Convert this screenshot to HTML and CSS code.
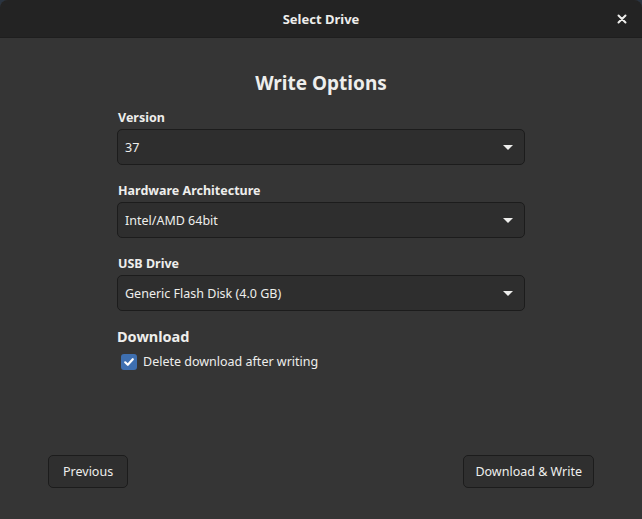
FILE: index.html
```html
<!DOCTYPE html>
<html>
<head>
<meta charset="utf-8">
<link rel="stylesheet" href="styles.css">
</head>
<body>
<div class="window">
  <header class="titlebar">
    <span class="title">Select Drive</span>
    <button class="close" aria-label="Close">
      <svg width="10" height="10" viewBox="0 0 10 10"><path d="M1.5 1.5 L8.5 8.5 M8.5 1.5 L1.5 8.5" stroke="#eeeeec" stroke-width="2" stroke-linecap="round"/></svg>
    </button>
  </header>
  <main class="content">
    <h1 class="heading">Write Options</h1>
    <div class="form">
      <div class="field">
        <label class="label">Version</label>
        <div class="combo"><span>37</span><span class="arrow"></span></div>
      </div>
      <div class="field">
        <label class="label">Hardware Architecture</label>
        <div class="combo"><span>Intel/AMD 64bit</span><span class="arrow"></span></div>
      </div>
      <div class="field">
        <label class="label">USB Drive</label>
        <div class="combo"><span>Generic Flash Disk (4.0 GB)</span><span class="arrow"></span></div>
      </div>
      <div class="download">
        <h2 class="subheading">Download</h2>
        <label class="check">
          <span class="box">
            <svg width="12" height="12" viewBox="0 0 12 12"><path d="M2.2 6.3 L4.8 8.8 L9.8 3.2" stroke="#ffffff" stroke-width="2.2" fill="none" stroke-linecap="round" stroke-linejoin="round"/></svg>
          </span>
          <span>Delete download after writing</span>
        </label>
      </div>
    </div>
  </main>
  <footer class="actions">
    <button class="btn">Previous</button>
    <button class="btn btn-wide">Download &amp; Write</button>
  </footer>
</div>
</body>
</html>
```

FILE: styles.css
```css
* { box-sizing: border-box; }
html, body { margin: 0; padding: 0; }
body {
  width: 642px;
  height: 519px;
  background: #2a3440;
  font-family: "Noto Sans", "Open Sans", sans-serif;
  color: #eeeeec;
  overflow: hidden;
}
.window {
  width: 642px;
  height: 519px;
  background: #353535;
  border-radius: 8px 8px 0 0;
  display: flex;
  flex-direction: column;
  overflow: hidden;
}
.titlebar {
  height: 38px;
  flex: none;
  background: #232323;
  border-bottom: 1px solid #1e1e1e;
  display: flex;
  align-items: center;
  justify-content: center;
  position: relative;
}
.title {
  font-size: 13px;
  font-weight: 700;
  color: #eeeeec;
}
.close {
  position: absolute;
  right: 15px;
  top: 14px;
  width: 10px;
  height: 10px;
  padding: 0;
  border: 0;
  background: none;
  display: flex;
}
.content {
  flex: 1;
  display: flex;
  flex-direction: column;
  align-items: center;
}
.heading {
  margin: 31px 0 0;
  font-size: 19px;
  font-weight: 700;
  line-height: 28px;
  color: #eeeeec;
}
.form {
  width: 408px;
  margin-top: 12px;
  display: flex;
  flex-direction: column;
  gap: 17px;
}
.field {
  display: flex;
  flex-direction: column;
  gap: 3px;
}
.label {
  font-size: 12.5px;
  font-weight: 700;
  line-height: 17px;
  padding-left: 1px;
}
.combo {
  height: 36px;
  background: #2e2e2e;
  border: 1px solid #1c1c1c;
  border-radius: 5px;
  display: flex;
  align-items: center;
  justify-content: space-between;
  padding: 0 11px 0 7px;
  font-size: 12.5px;
  color: #eeeeec;
}
.arrow {
  width: 0;
  height: 0;
  border-left: 5px solid transparent;
  border-right: 5px solid transparent;
  border-top: 5px solid #eeeeec;
}
.download {
  margin-top: -2px;
  display: flex;
  flex-direction: column;
  gap: 7px;
}
.subheading {
  margin: 0;
  font-size: 14.5px;
  font-weight: 700;
  line-height: 20px;
}
.check {
  display: flex;
  align-items: center;
  gap: 6px;
  padding-left: 4px;
  font-size: 12.5px;
}
.box {
  width: 16px;
  height: 16px;
  border-radius: 3px;
  background: #3e6fb0;
  display: flex;
  align-items: center;
  justify-content: center;
}
.actions {
  flex: none;
  display: flex;
  justify-content: space-between;
  padding: 0 48px 31px 48px;
}
.btn {
  height: 33px;
  padding: 0 14px;
  background: #2f2f2f;
  border: 1px solid #1c1c1c;
  border-radius: 5px;
  color: #eeeeec;
  font-family: inherit;
  font-size: 12.5px;
}
.btn-wide {
  padding: 0 11px;
}
```
